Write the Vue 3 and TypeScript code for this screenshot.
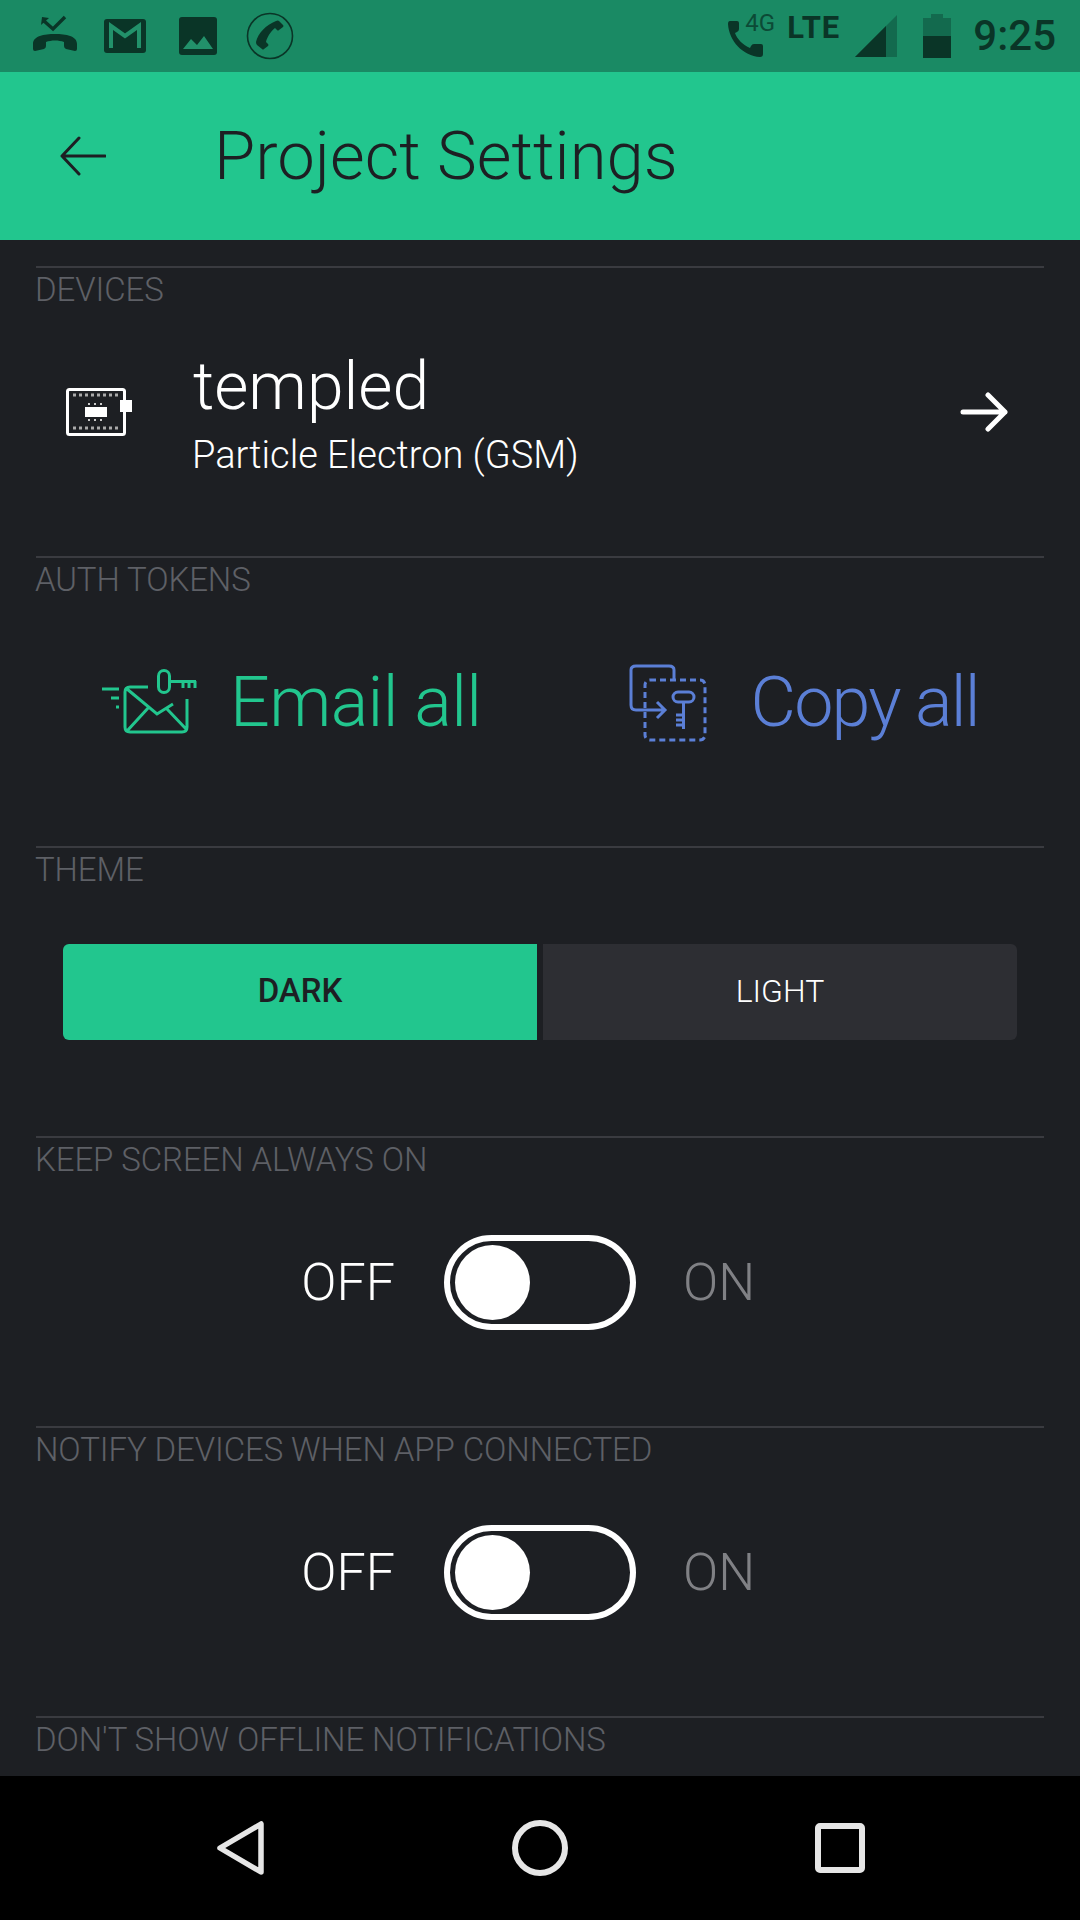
<template>
  <div class="screen">
    <div class="status-bar">
      <div class="status-left">
        <svg class="ic-missed" viewBox="0 0 46 40" aria-hidden="true">
          <path d="M10 2 L9 10 L17 3 Z" fill="#0a3527" />
          <path d="M12 6 L21 14 L33 2" fill="none" stroke="#0a3527" stroke-width="3.4" />
          <path d="M1 29 C1 21 12 19 23 19 C34 19 45 21 45 29 L45 34 Q45 36 43 36 L34 34 Q32 33 32 31 L32 27 C27 25 19 25 14 27 L14 31 Q14 33 12 34 L3 36 Q1 36 1 34 Z" fill="#0a3527" />
        </svg>
        <svg class="ic-gmail" viewBox="0 0 42 34" aria-hidden="true">
          <rect width="42" height="34" rx="3" fill="#0a3527" />
          <path d="M7 29 V7 L21 17 L35 7 V29" fill="none" stroke="#22916a" stroke-width="4" />
        </svg>
        <svg class="ic-image" viewBox="0 0 38 38" aria-hidden="true">
          <rect width="38" height="38" rx="3" fill="#0a3527" />
          <path d="M4 32 L12 22 L18 28 L25 19 L34 32 Z" fill="#22916a" />
        </svg>
        <svg class="ic-call" viewBox="0 0 48 48" aria-hidden="true">
          <circle cx="24" cy="24" r="22.5" fill="none" stroke="#0a3527" stroke-width="1.6" />
          <path d="M33 9 L37 13 Q38 14 37 15 L33 18 Q32 19 31 18 L29 16 C25 19 21 25 20 30 L22 32 Q23 33 22 34 L18 37 Q17 38 16 37 L11 33 Q10 32 10 30 C12 21 20 13 30 9 Q32 8 33 9 Z" fill="#0a3527" />
        </svg>
      </div>
      <div class="status-right">
        <div class="volte">
          <svg class="ic-phone" viewBox="0 0 35 36" aria-hidden="true">
            <path d="M2 0 L9 0 Q11 0 11 2 L11 8 Q11 10 9 11 L7 12 C9 18 15 24 22 27 L23 25 Q24 23 26 23 L33 23 Q35 23 35 25 L35 33 Q35 36 32 36 C15 35 1 20 0 3 Q0 0 2 0 Z" fill="#0a3527" />
          </svg>
          <span class="volte-text">4G</span>
        </div>
        <span class="lte">LTE</span>
        <svg class="ic-signal" viewBox="0 0 42 42" aria-hidden="true">
          <path d="M42 0 V42 H0 Z" fill="#136a4e" />
          <path d="M31 11 V42 H0 Z" fill="#0a3527" />
        </svg>
        <svg class="ic-battery" viewBox="0 0 28 44" aria-hidden="true">
          <path d="M8 0 H20 V4 H28 V44 H0 V4 H8 Z" fill="#136a4e" />
          <rect y="22" width="28" height="22" fill="#0a3527" />
        </svg>
        <span class="clock">9:25</span>
      </div>
    </div>

    <header class="app-bar">
      <svg class="ic-back" viewBox="0 0 46 40" aria-hidden="true">
        <path d="M19 2 L2 20 L19 38 M2 20 H45" fill="none" stroke="#1d1f23" stroke-width="3" stroke-linecap="round" stroke-linejoin="round" />
      </svg>
      <h1 class="title">Project Settings</h1>
    </header>

    <main class="content">
      <section class="section">
        <div class="section-label">DEVICES</div>
        <div class="section-body device">
          <svg class="ic-chip" viewBox="0 0 66 48" aria-hidden="true">
            <rect x="1.5" y="1.5" width="57" height="45" rx="2" fill="none" stroke="#fff" stroke-width="3" />
            <path d="M7 7 H54 M7 40 H54" fill="none" stroke="#aaa" stroke-width="3" stroke-dasharray="3 3" />
            <rect x="19" y="19" width="22" height="10" fill="#fff" />
            <path d="M22 16 H39 M22 32 H39" fill="none" stroke="#ccc" stroke-width="2" stroke-dasharray="2 4" />
            <rect x="54" y="12" width="12" height="12" fill="#fff" />
          </svg>
          <div class="device-text">
            <div class="device-name">templed</div>
            <div class="device-model">Particle Electron (GSM)</div>
          </div>
          <svg class="ic-forward" viewBox="0 0 48 40" aria-hidden="true">
            <path d="M28 3 L45 20 L28 37 M3 20 H45" fill="none" stroke="#fff" stroke-width="5" stroke-linecap="round" stroke-linejoin="round" />
          </svg>
        </div>
      </section>

      <section class="section">
        <div class="section-label">AUTH TOKENS</div>
        <div class="section-body tokens">
          <div class="token email">
            <svg class="ic-email" viewBox="20 25 100 70" aria-hidden="true">
              <path d="M22 47 H39 M31 56 H39 M36 65 H39 M68 45 H50 Q45 45 45 50 V85 Q45 90 50 90 H102 Q107 90 107 85 V57 M47 47 L77 72 L93 62 M69 65 L47 89 M87 67 L107 88" fill="none" stroke="#22c68e" stroke-width="3" />
              <rect x="78.500" y="28.500" width="11" height="22" rx="5.500" fill="none" stroke="#22c68e" stroke-width="3" />
              <path d="M90 39.500 H116 M103 39 V46 M109 39 V46 M115 39 V46" fill="none" stroke="#22c68e" stroke-width="3" />
            </svg>
            <span>Email all</span>
          </div>
          <div class="token copy">
            <svg class="ic-copy" viewBox="18 20 80 80" aria-hidden="true">
              <path d="M65 38 V28 Q65 24 60 24 H27 Q22 24 22 28 V63 Q22 68 27 68 H55 M48 60 L56 68 L48 76" fill="none" stroke="#5b7fd6" stroke-width="3" />
              <rect x="36" y="38" width="60" height="60" rx="5" fill="none" stroke="#5b7fd6" stroke-width="3" stroke-dasharray="6 4" />
              <rect x="64" y="50" width="21" height="10" rx="5" fill="none" stroke="#5b7fd6" stroke-width="3" />
              <path d="M74.500 60 V87 M67 73 H74 M67 78 H74 M67 83 H74" fill="none" stroke="#5b7fd6" stroke-width="3" />
            </svg>
            <span>Copy all</span>
          </div>
        </div>
      </section>

      <section class="section">
        <div class="section-label">THEME</div>
        <div class="section-body theme">
          <div class="seg seg--active">DARK</div>
          <div class="seg">LIGHT</div>
        </div>
      </section>

      <section v-for="label in toggles" :key="label" class="section">
        <div class="section-label">{{ label }}</div>
        <div class="section-body switch-row">
          <span class="switch-off">OFF</span>
          <div class="switch"><div class="knob"></div></div>
          <span class="switch-on">ON</span>
        </div>
      </section>

      <section class="section">
        <div class="section-label">DON'T SHOW OFFLINE NOTIFICATIONS</div>
      </section>
    </main>

    <nav class="nav-bar">
      <svg viewBox="0 0 56 56" aria-hidden="true">
        <path d="M49 4 V52 L8 28 Z" fill="none" stroke="#e6e6e6" stroke-width="5.500" stroke-linejoin="round" />
      </svg>
      <svg viewBox="0 0 56 56" aria-hidden="true">
        <circle cx="28" cy="28" r="25" fill="none" stroke="#e6e6e6" stroke-width="6" />
      </svg>
      <svg viewBox="0 0 56 56" aria-hidden="true">
        <rect x="6" y="6" width="44" height="44" rx="2" fill="none" stroke="#e6e6e6" stroke-width="6" />
      </svg>
    </nav>
  </div>
</template>

<script setup lang="ts">
const toggles: string[] = ['KEEP SCREEN ALWAYS ON', 'NOTIFY DEVICES WHEN APP CONNECTED']
</script>

<style>
html,
body {
  margin: 0;
  background: #1d1f23;
}
</style>

<style scoped>
.screen {
  width: 1080px;
  height: 1920px;
  display: flex;
  flex-direction: column;
  overflow: hidden;
  background: #1d1f23;
  font-family: Roboto, "Liberation Sans", sans-serif;
  font-weight: 300;
}

.status-bar {
  height: 72px;
  flex: none;
  box-sizing: border-box;
  padding: 0 24px 0 32px;
  background: #1a8a64;
  color: #0a3527;
  display: flex;
  align-items: center;
  justify-content: space-between;
}

.status-left,
.status-right {
  display: flex;
  align-items: center;
}

.ic-missed {
  width: 46px;
  height: 40px;
  margin-top: -2px;
}
.ic-gmail {
  width: 42px;
  height: 34px;
  margin-left: 26px;
}
.ic-image {
  width: 38px;
  height: 38px;
  margin-left: 33px;
}
.ic-call {
  width: 48px;
  height: 48px;
  margin-left: 29px;
}

.volte {
  width: 44px;
  height: 44px;
  position: relative;
}
.ic-phone {
  width: 35px;
  height: 36px;
  position: absolute;
  left: 0;
  top: 7px;
}
.volte-text {
  position: absolute;
  left: 17px;
  top: -6px;
  font-size: 24px;
  line-height: 30px;
  font-weight: 400;
  color: #0c4a36;
}
.lte {
  margin-left: 15px;
  font-size: 31px;
  line-height: 36px;
  font-weight: 700;
  margin-top: -16px;
  letter-spacing: 1px;
}
.ic-signal {
  width: 42px;
  height: 42px;
  margin-left: 15px;
}
.ic-battery {
  width: 28px;
  height: 44px;
  margin-left: 26px;
}
.clock {
  margin-left: 22px;
  font-size: 42px;
  font-weight: 500;
  line-height: 48px;
}

.app-bar {
  height: 168px;
  flex: none;
  background: #22c68e;
  display: flex;
  align-items: center;
  padding-left: 60px;
  color: #1d1f23;
}
.ic-back {
  width: 46px;
  height: 40px;
}
.title {
  margin: 0 0 0 108px;
  font-size: 67px;
  font-weight: 300;
  line-height: 80px;
}

.content {
  flex: 1;
  min-height: 0;
  overflow: hidden;
  padding: 26px 36px 0;
}
.section {
  height: 290px;
  box-sizing: border-box;
  border-top: 2px solid #3a3b40;
}
.section-label {
  height: 40px;
  margin-left: -1px;
  font-size: 33px;
  line-height: 44px;
  color: #5e6066;
  letter-spacing: -0.1px;
}
.section-body {
  height: 208px;
  display: flex;
  align-items: center;
}

.ic-chip {
  width: 66px;
  height: 48px;
  margin-left: 30px;
}
.device-text {
  flex: 1;
  margin: 12px 0 0 60px;
  color: #fff;
}
.device-name {
  margin-left: 1px;
  font-size: 66px;
  line-height: 74px;
}
.device-model {
  font-size: 38px;
  line-height: 63px;
}
.ic-forward {
  width: 48px;
  height: 40px;
  margin-right: 36px;
}

.tokens {
  padding-left: 64px;
  font-size: 70px;
}
.token {
  display: flex;
  align-items: center;
}
.email {
  color: #22c68e;
  letter-spacing: -0.6px;
}
.copy {
  color: #5b7fd6;
  letter-spacing: -1.8px;
  margin-left: 145px;
}
.ic-email {
  width: 100px;
  height: 70px;
  margin-right: 30px;
}
.ic-copy {
  width: 80px;
  height: 80px;
  margin-right: 44px;
}

.theme {
  gap: 6px;
  padding: 0 27px;
}
.seg {
  flex: 1;
  height: 96px;
  display: flex;
  align-items: center;
  justify-content: center;
  background: #2d2e33;
  color: #fff;
  font-size: 32px;
  font-weight: 300;
  padding-bottom: 3px;
  box-sizing: border-box;
}
.seg:first-child {
  border-radius: 6px 0 0 6px;
}
.seg:last-child {
  border-radius: 0 6px 6px 0;
}
.seg--active {
  background: #22c68e;
  color: #1d1f23;
  font-size: 33px;
  font-weight: 500;
}

.switch-row {
  display: grid;
  grid-template-columns: 1fr auto 1fr;
  align-items: center;
  column-gap: 49px;
  font-size: 52px;
  color: #fff;
}
.switch-off {
  justify-self: end;
}
.switch-on {
  margin-left: -2px;
  color: #808185;
}
.switch {
  width: 192px;
  height: 95px;
  box-sizing: border-box;
  border: 6px solid #fff;
  border-radius: 48px;
  padding-left: 5px;
  display: flex;
  align-items: center;
}
.knob {
  width: 75px;
  height: 75px;
  border-radius: 50%;
  background: #fff;
}

.nav-bar {
  height: 144px;
  flex: none;
  background: #000;
  display: flex;
  align-items: center;
  justify-content: center;
  gap: 244px;
}
.nav-bar svg {
  width: 56px;
  height: 56px;
}
</style>
